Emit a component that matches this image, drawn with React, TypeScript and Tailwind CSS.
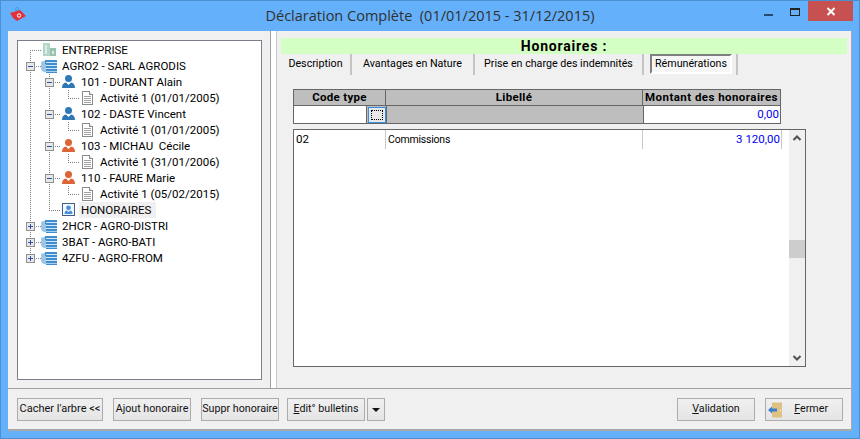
import React from "react";

const V = ({ x, y1 = 0, y2 = 16 }: { x: number; y1?: number; y2?: number }) => (
  <line x1={x + 0.5} x2={x + 0.5} y1={y1} y2={y2} stroke="#7f7f7f" strokeDasharray="1 1" />
);
const H = ({ y = 8, x1, x2 }: { y?: number; x1: number; x2: number }) => (
  <line x1={x1} x2={x2} y1={y + 0.5} y2={y + 0.5} stroke="#7f7f7f" strokeDasharray="1 1" />
);

const Expander = ({ x, open }: { x: number; open: boolean }) => (
  <g transform={`translate(${x - 4},4)`} shapeRendering="crispEdges">
    <rect x="0.5" y="0.5" width="8" height="8" fill="#e8e8e8" stroke="#8f8f8f" />
    <rect x="2" y="4" width="5" height="1" fill="#2f4f9f" />
    {!open && <rect x="4" y="2" width="1" height="5" fill="#2f4f9f" />}
  </g>
);

const Server = ({ x }: { x: number }) => (
  <g transform={`translate(${x},1)`}>
    <path d="M0 4 Q0 2 3 2 H10 V13 H4 Q0 13 0 9 Z" fill="#9cc6e6" />
    <path d="M4 1 H16 V14 H5 V5 H4 Z" fill="#3f8ccf" />
    <rect x="5" y="3" width="11" height="1" fill="#cfe6f7" />
    <rect x="5" y="6" width="11" height="1" fill="#cfe6f7" />
    <rect x="5" y="9" width="11" height="1" fill="#cfe6f7" />
    <rect x="5" y="12" width="11" height="1" fill="#a9cfea" />
  </g>
);

const Person = ({ x, c }: { x: number; c: string }) => (
  <g transform={`translate(${x},0)`} fill={c}>
    <circle cx="6.5" cy="4.5" r="3.5" />
    <path d="M0 14 Q0 9 4 8.5 L6.5 11 L9 8.5 Q13 9 13 14 Z" />
  </g>
);

const Page = ({ x }: { x: number }) => (
  <g transform={`translate(${x},1)`} shapeRendering="crispEdges">
    <path d="M0.5 0.5 H7.5 L10.5 3.5 V13.5 H0.5 Z" fill="#fff" stroke="#8a8a8a" />
    <path d="M7.5 0.5 V3.5 H10.5" fill="#e4e4e4" stroke="#8a8a8a" />
    <rect x="2" y="5" width="7" height="1" fill="#a0a0a0" />
    <rect x="2" y="7" width="7" height="1" fill="#a0a0a0" />
    <rect x="2" y="9" width="7" height="1" fill="#a0a0a0" />
    <rect x="2" y="11" width="7" height="1" fill="#a0a0a0" />
  </g>
);

const Building = ({ x }: { x: number }) => (
  <g transform={`translate(${x},1)`} shapeRendering="crispEdges">
    <rect x="0" y="0" width="7" height="13" fill="#b4d6c6" />
    <rect x="2" y="2" width="2" height="9" fill="#dcebe4" />
    <rect x="7" y="5" width="6" height="8" fill="#98c4af" />
    <rect x="9" y="8" width="2" height="3" fill="#dcebe4" />
  </g>
);

const HonoIcon = ({ x }: { x: number }) => (
  <g transform={`translate(${x},1)`}>
    <rect x="0.5" y="0.5" width="12" height="12" fill="#f4f9ff" stroke="#3d5f8f" shapeRendering="crispEdges" />
    <circle cx="6.5" cy="4.8" r="2.4" fill="#4a90d9" />
    <path d="M2.5 11 Q2.5 7.8 5 7.6 L6.5 9 L8 7.6 Q10.5 7.8 10.5 11 Z" fill="#4a90d9" />
  </g>
);

type RowProps = { w: number; children: React.ReactNode; text: string; selected?: boolean };
const Row = ({ w, children, text, selected }: RowProps) => (
  <div className="flex h-4 items-center whitespace-pre">
    <svg width={w} height={16} className="flex-none">
      {children}
    </svg>
    <span className={selected ? "bg-[#f0f0f0] pl-[2px] pr-[5px] -ml-[2px] leading-4 h-4" : "leading-4"}>{text}</span>
  </div>
);

const Employee = ({ label, act, c }: { label: string; act: string; c: string }) => (
  <>
    <Row w={63} text={label}>
      <V x={12} />
      <V x={31} />
      <H x1={35} x2={42} />
      <Expander x={31} open />
      <Person x={44} c={c} />
    </Row>
    <Row w={82} text={act}>
      <V x={12} />
      <V x={31} />
      <V x={50} y1={0} y2={8} />
      <H x1={50} x2={62} />
      <Page x={64} />
    </Row>
  </>
);

const Btn = ({ className = "", children }: { className?: string; children: React.ReactNode }) => (
  <button className={`h-[23px] flex-none border border-[#acacac] bg-gradient-to-b from-[#f0f0f0] to-[#e5e5e5] text-[10.7px] text-[#111] flex items-center justify-center whitespace-nowrap ${className}`}>
    {children}
  </button>
);

const Tab = ({ w, children }: { w: string; children: React.ReactNode }) => (
  <div className={`h-[21px] flex-none flex items-center justify-center whitespace-nowrap border-r-2 border-[#c4c4c4] ${w}`}>
    {children}
  </div>
);

export default function App() {
  return (
    <div
      className="w-[860px] h-[439px] bg-[#65b0fb] border border-[#4a8fd0] flex flex-col text-[11.5px] text-black overflow-hidden"
      style={{ fontFamily: 'Roboto, "Liberation Sans", sans-serif' }}
    >
      {/* title bar */}
      <div className="h-[30px] flex-none grid grid-cols-[1fr_auto_1fr]">
        <div className="pl-[8px] pt-[5px]">
          <svg width="18" height="17" viewBox="0 0 18 17">
            <path d="M1 7 L11 4 L17 10 L8 15 L4 12 Z" fill="#e0323c" />
            <circle cx="10" cy="9.5" r="1.7" fill="none" stroke="#fff" strokeWidth="1" />
            <circle cx="8" cy="3" r="1.5" fill="none" stroke="#3f9fe0" strokeWidth="1" />
          </svg>
        </div>
        <div className="text-[14.5px] leading-[30px] text-[#303030] whitespace-pre" style={{ fontFamily: '"Open Sans", sans-serif' }}>
          Déclaration Complète  (01/01/2015 - 31/12/2015)
        </div>
        <div className="flex justify-end items-start pr-[6px]">
          <div className="w-[9px] h-[2px] bg-[#26496e] mt-[13px] mr-[17px]" />
          <div className="w-[10px] h-[8px] border border-[#222] border-t-2 mt-[7px] mr-[8px]" />
          <div className="w-[45px] h-[20px] bg-[#c75050] flex items-center justify-center">
            <svg width="10" height="9" viewBox="0 0 10 9">
              <path d="M1.5 1 L8.5 8 M8.5 1 L1.5 8" stroke="#fff" strokeWidth="2" />
            </svg>
          </div>
        </div>
      </div>

      {/* client area */}
      <div className="mx-[7px] mb-[7px] flex-1 min-h-0 bg-[#f0f0f0] border-b-2 border-r border-[#a8a8a8] flex flex-col">
        <div className="h-[358px] flex-none flex border-b border-[#a0a0a0]">
          {/* left pane */}
          <div className="w-[263px] flex-none pl-[9px] pt-[9px] border-r border-[#a0a0a0]">
            <div className="w-[245px] h-[340px] bg-white border border-[#7a7f8a] pt-px">
              <Row w={44} text="ENTREPRISE">
                <V x={12} y1={8} />
                <H x1={12} x2={23} />
                <Building x={25} />
              </Row>
              <Row w={44} text="AGRO2 - SARL AGRODIS">
                <V x={12} />
                <H x1={16} x2={23} />
                <Expander x={12} open />
                <Server x={23} />
              </Row>
              <Employee label="101 - DURANT Alain" act="Activité 1 (01/01/2005)" c="#2f78b8" />
              <Employee label="102 - DASTE Vincent" act="Activité 1 (01/01/2005)" c="#2f78b8" />
              <Employee label="103 - MICHAU  Cécile" act="Activité 1 (31/01/2006)" c="#dd6434" />
              <Employee label="110 - FAURE Marie" act="Activité 1 (05/02/2015)" c="#dd6434" />
              <Row w={63} text="HONORAIRES" selected>
                <V x={12} />
                <V x={31} y1={0} y2={8} />
                <H x1={31} x2={43} />
                <HonoIcon x={44} />
              </Row>
              <Row w={44} text="2HCR - AGRO-DISTRI">
                <V x={12} />
                <H x1={16} x2={23} />
                <Expander x={12} open={false} />
                <Server x={23} />
              </Row>
              <Row w={44} text="3BAT - AGRO-BATI">
                <V x={12} />
                <H x1={16} x2={23} />
                <Expander x={12} open={false} />
                <Server x={23} />
              </Row>
              <Row w={44} text="4ZFU - AGRO-FROM">
                <V x={12} y1={0} y2={8} />
                <H x1={16} x2={23} />
                <Expander x={12} open={false} />
                <Server x={23} />
              </Row>
            </div>
          </div>
          <div className="w-[5px] flex-none bg-white" />
          {/* right pane */}
          <div className="flex-1 min-w-0 border-l border-[#c8c8c8] pl-[4px] pt-[7px] pr-[4px]">
            <div className="h-[16px] bg-[#d4ffc4] text-center text-[14px] leading-[16px] font-bold tracking-[0.8px]">
              Honoraires :
            </div>
            <div className="flex h-[21px] text-[10.7px]">
              <Tab w="w-[71px]">Description</Tab>
              <Tab w="w-[123px]">Avantages en Nature</Tab>
              <Tab w="w-[169px]">Prise en charge des indemnités</Tab>
              <div className="w-[6px] flex-none" />
              <div className="w-[88px] h-[21px] flex-none border-r-2 border-[#c4c4c4] pr-[4px]">
                <div className="h-[20px] border-2 border-t-[#808080] border-l-[#808080] border-b-white border-r-white flex items-center justify-center bg-[#f6f6f6] whitespace-nowrap">
                  Rémunérations
                </div>
              </div>
            </div>

            <div className="ml-[12px] mt-[14px] w-[488px]">
              <div className="grid grid-cols-[92px_257px_137px] h-[17px] bg-[#bebebe] border border-[#666] text-center font-bold leading-[15px]">
                <div className="border-r border-[#666] tracking-[0.3px]">Code type</div>
                <div className="border-r border-[#666] tracking-[0.3px]">Libellé</div>
                <div className="whitespace-nowrap tracking-[0.45px]">Montant des honoraires</div>
              </div>
              <div className="grid grid-cols-[92px_257px_137px] h-[18px] bg-[#bebebe] border border-t-0 border-[#666]">
                <div className="flex">
                  <div className="w-[73px] h-[17px] bg-white border-r border-[#666]" />
                  <div className="w-[18px] h-[16px] border border-[#3a8fe0] bg-[#e8e8e8] ml-px mt-px p-[2px]">
                    <div className="w-full h-full border border-dotted border-black" />
                  </div>
                </div>
                <div className="border-l border-[#666]" />
                <div className="bg-white border-l border-[#666] text-right pr-px text-[#0000f0] leading-[17px]">0,00</div>
              </div>
            </div>

            <div className="ml-[12px] mt-[5px] w-[513px] h-[238px] bg-white border border-[#666] flex">
              <div className="flex-1 min-w-0">
                <div className="grid grid-cols-[92px_257px_139px] h-[16px] leading-[18px]">
                  <div className="pl-[2px] border-r border-[#c8c8c8]">02</div>
                  <div className="pl-[2px] border-r border-[#c8c8c8] text-[10.5px] leading-[19px] tracking-[-0.2px]">Commissions</div>
                  <div className="pr-[1px] text-right text-[#0000f0] border-r border-[#c8c8c8]">3 120,00</div>
                </div>
              </div>
              <div className="w-[16px] flex-none bg-[#f0f0f0] flex flex-col items-center">
                <svg width="16" height="17" viewBox="0 0 16 17" className="flex-none">
                  <path d="M4.5 10 L8 6.5 L11.5 10" fill="none" stroke="#505050" strokeWidth="2" />
                </svg>
                <div className="w-[16px] h-[18px] bg-[#cdcdcd] mt-[93px] flex-none" />
                <div className="flex-1" />
                <svg width="16" height="17" viewBox="0 0 16 17" className="flex-none">
                  <path d="M4.5 7 L8 10.5 L11.5 7" fill="none" stroke="#505050" strokeWidth="2" />
                </svg>
              </div>
            </div>
          </div>
        </div>

        {/* bottom buttons */}
        <div className="flex-1 flex items-start pt-[9px] pl-[9px] pr-[8px]">
          <Btn className="w-[86px] text-[11px]">Cacher l'arbre &lt;&lt;</Btn>
          <Btn className="w-[78px] ml-[10px]">Ajout honoraire</Btn>
          <Btn className="w-[78px] ml-[10px]">Suppr honoraire</Btn>
          <Btn className="w-[78px] ml-[8px]"><span><u>E</u>dit° bulletins</span></Btn>
          <Btn className="w-[18px] ml-[2px]">
            <svg width="8" height="4" viewBox="0 0 8 4"><path d="M0 0 H8 L4 4 Z" fill="#111" /></svg>
          </Btn>
          <div className="flex-1" />
          <Btn className="w-[78px]"><span><u>V</u>alidation</span></Btn>
          <Btn className="w-[78px] ml-[10px] pl-[1px] pr-[14px]">
            <svg width="16" height="16" viewBox="0 0 16 16" className="flex-none">
              <rect x="5" y="0.5" width="10" height="15" fill="#dfc283" />
              <rect x="13" y="8" width="1" height="1" fill="#fff" />
              <path d="M1 8 L5 4.5 V6.5 H10 V9.5 H5 V11.5 Z" fill="#3a7fd0" />
            </svg>
            <span className="ml-auto"><u>F</u>ermer</span>
          </Btn>
        </div>
      </div>
    </div>
  );
}
